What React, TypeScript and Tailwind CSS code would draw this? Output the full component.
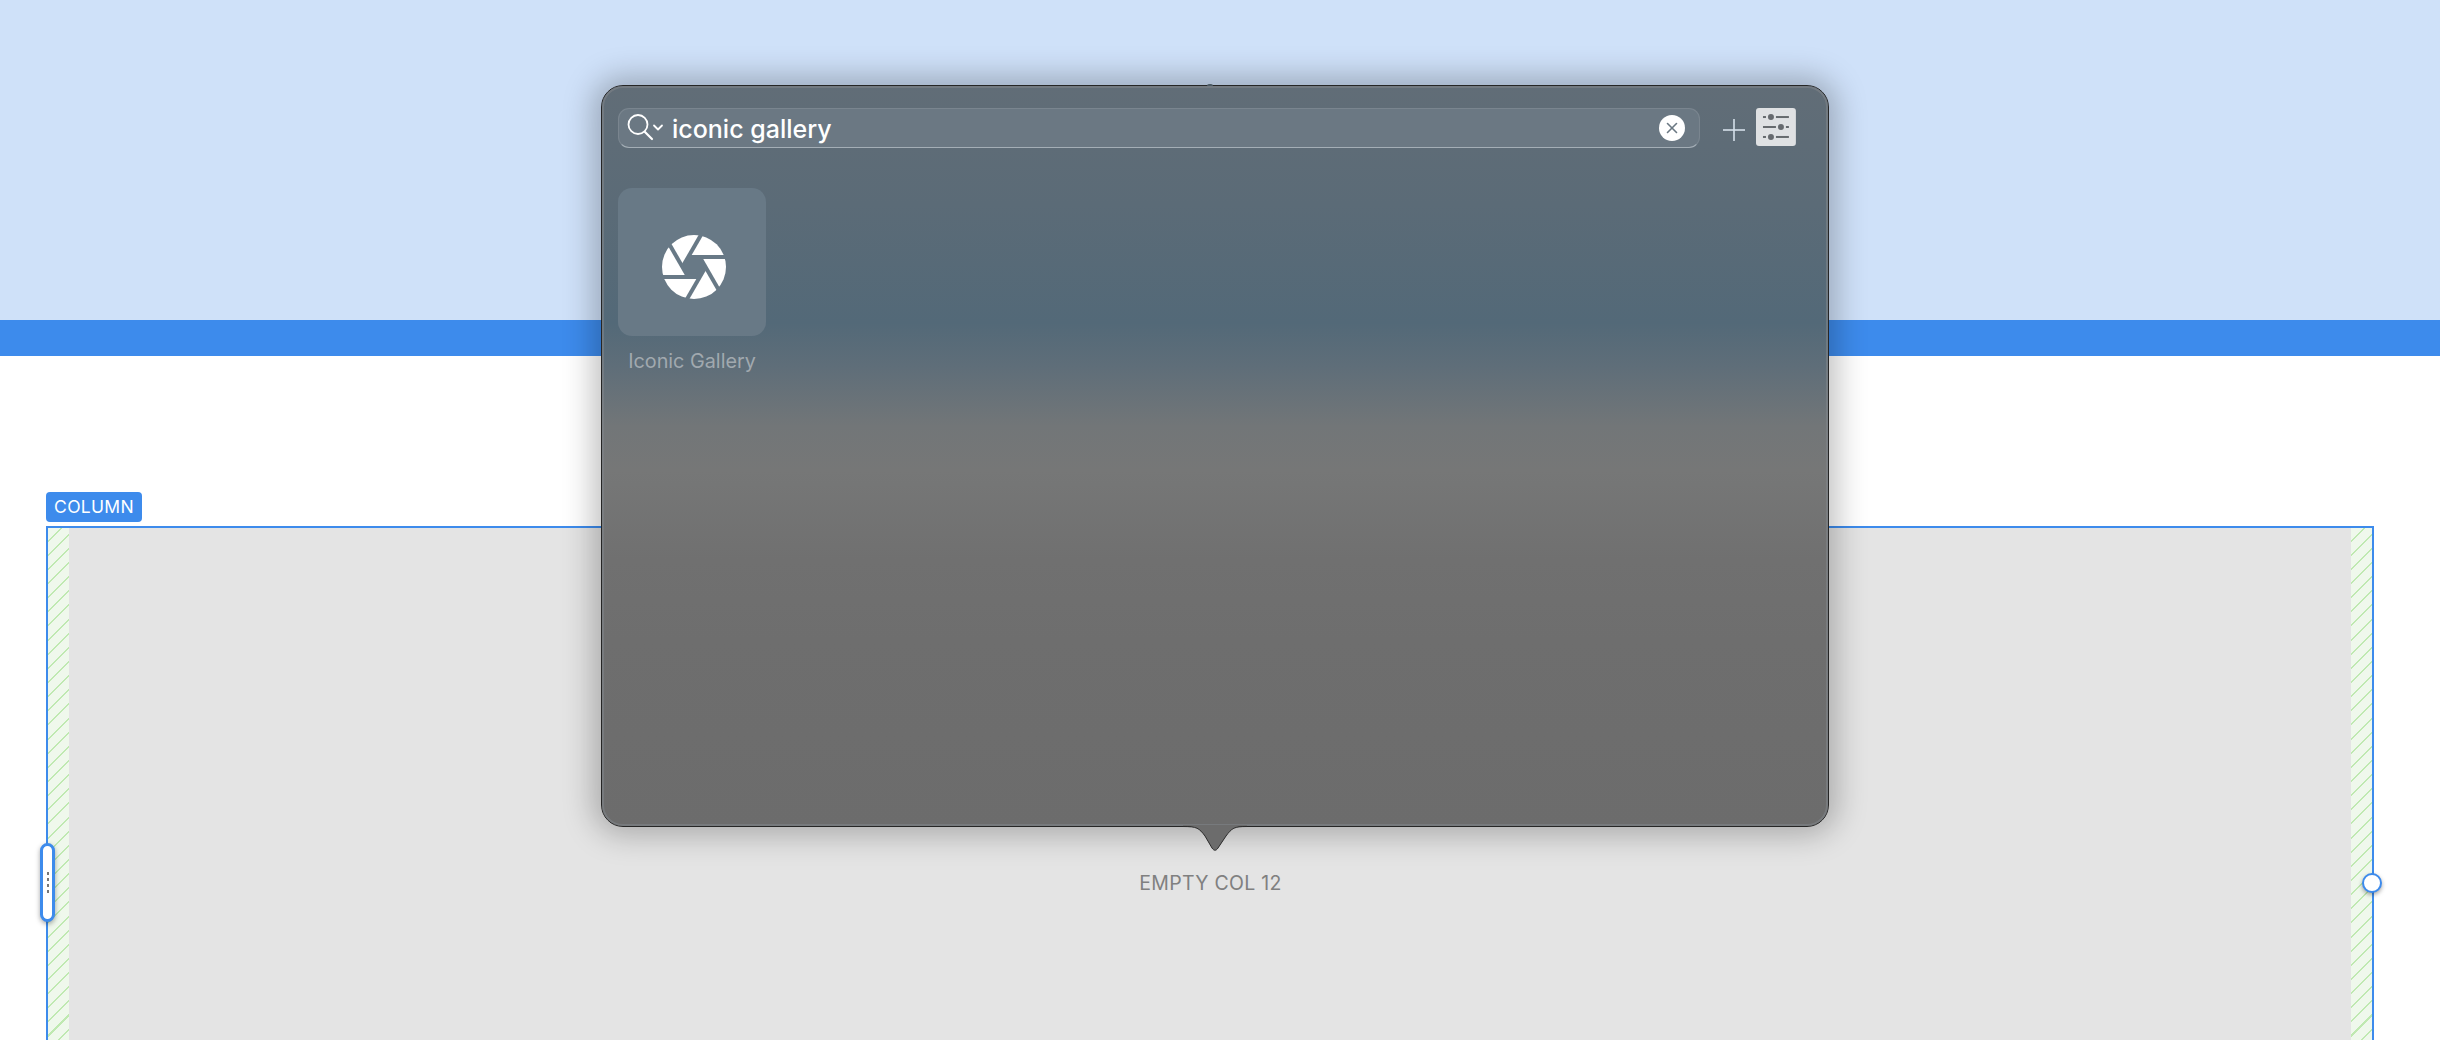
import React from "react";

const hatch =
  "w-[21px] shrink-0 bg-[repeating-linear-gradient(135deg,#eff8ec_0,#eff8ec_8.5px,#bfe9b1_8.5px,#bfe9b1_10px)]";

function Aperture() {
  const rot = [0, 60, 120, 180, 240, 300];
  return (
    <svg width="66" height="66" viewBox="-33 -33 66 66" className="ml-[3px] mt-[10px]">
      <mask id="ap">
        <circle cx="0" cy="0" r="32" fill="white" />
        <polygon points="-5.8,-10 5.8,-10 11.5,0 5.8,10 -5.8,10 -11.5,0" fill="black" />
        {rot.map((r) => (
          <line key={r} x1="-5.8" y1="-10" x2="40" y2="-10" stroke="black" strokeWidth="4" transform={`rotate(${r})`} />
        ))}
      </mask>
      <rect x="-33" y="-33" width="66" height="66" fill="white" mask="url(#ap)" />
    </svg>
  );
}

function SearchGlyph() {
  return (
    <svg width="37" height="30" viewBox="0 0 37 30" fill="none" stroke="white" className="shrink-0">
      <circle cx="11" cy="11.5" r="9.5" strokeWidth="1.8" />
      <line x1="18" y1="19" x2="25" y2="26" strokeWidth="2.2" strokeLinecap="round" />
      <path d="M27 12.5 L31 16.5 L35 12.5" strokeWidth="1.8" strokeLinecap="round" strokeLinejoin="round" />
    </svg>
  );
}

function Sliders() {
  return (
    <svg width="40" height="38" viewBox="0 0 40 38" className="block">
      <rect width="40" height="38" rx="3" fill="#dfe1e3" />
      <g fill="#666a6e">
        <rect x="7" y="8" width="3" height="2" />
        <circle cx="15" cy="9" r="3" />
        <rect x="20" y="8" width="13" height="2" />
        <rect x="7" y="18" width="13" height="2" />
        <circle cx="25" cy="19" r="3" />
        <rect x="30" y="18" width="3" height="2" />
        <rect x="7" y="28" width="3" height="2" />
        <circle cx="15" cy="29" r="3" />
        <rect x="20" y="28" width="13" height="2" />
      </g>
    </svg>
  );
}

export default function App() {
  return (
    <div className="relative h-[1040px] w-[2440px] overflow-hidden bg-white font-['Inter',sans-serif]">
      <div className="h-[320px] bg-[#cfe1f9]" />
      <div className="h-[36px] bg-[#3d8bec]" />

      <div className="pl-[46px] pr-[66px] pt-[136px]">
        <div className="mb-[4px] flex h-[30px] w-[96px] items-center justify-center rounded-[4px] bg-[#3d8bec] text-[17.5px] tracking-[0.3px] text-white">
          COLUMN
        </div>
        <div className="relative flex h-[714px] border-2 border-[#3d8bec] bg-[#e4e4e4]">
          <div className={hatch} />
          <div className="flex flex-1 items-center justify-center pl-[1px] pt-[2px] text-[19.5px] tracking-[0.3px] text-[#808080]">
            EMPTY COL 12
          </div>
          <div className={hatch} />

          <div className="absolute left-[-8px] top-[315px] flex h-[79px] w-[15px] flex-col items-center justify-center gap-[3px] rounded-full border-[3px] border-[#3d8bec] bg-white shadow-[0_2px_5px_rgba(0,0,0,0.35)]">
            <span className="h-[3px] w-[2px] bg-[#777]" />
            <span className="h-[3px] w-[2px] bg-[#777]" />
            <span className="h-[3px] w-[2px] bg-[#777]" />
            <span className="h-[3px] w-[2px] bg-[#777]" />
          </div>
          <div className="absolute right-[-10px] top-[345px] h-[20px] w-[20px] rounded-full border-2 border-[#3d8bec] bg-white shadow-[0_2px_4px_rgba(0,0,0,0.35)]" />
        </div>
      </div>

      {/* popover */}
      <div className="absolute left-[601px] top-[85px] h-[742px] w-[1228px] rounded-[22px] border border-[#262626] bg-[linear-gradient(180deg,#616d77_0%,#5b6b77_16%,#536978_32%,#5f6e79_38%,#727678_46%,#767777_52%,#707070_64%,#6e6e6e_75%,#6c6c6c_100%)] shadow-[0_0_30px_8px_rgba(0,0,0,0.25)]">
        <div className="flex h-full flex-col rounded-[21px] border-[2px] border-[#7f8488]/60 pl-[14px] pr-[30px] pt-[20px]">
          <div className="flex items-start">
            <div className="flex h-[40px] w-[1085px] items-center rounded-[11px] border border-white/10 border-b-[#a4aeb6] bg-[#6b7883] pl-[8px] pr-[14px]">
              <SearchGlyph />
              <span className="ml-[8px] flex-1 pt-[2px] text-[25px] font-medium leading-none text-white">iconic gallery</span>
              <span className="flex h-[26px] w-[26px] items-center justify-center rounded-full bg-white">
                <svg width="12" height="12" viewBox="0 0 12 12" stroke="#6b7883" strokeWidth="1.6" strokeLinecap="round">
                  <line x1="1.5" y1="1.5" x2="10.5" y2="10.5" />
                  <line x1="10.5" y1="1.5" x2="1.5" y2="10.5" />
                </svg>
              </span>
            </div>
            <div className="ml-[23px] mr-[11px] mt-[11px]">
              <svg width="22" height="22" viewBox="0 0 22 22" stroke="#d5e0ea" strokeWidth="1.6" className="block">
                <line x1="11" y1="0" x2="11" y2="22" />
                <line x1="0" y1="11" x2="22" y2="11" />
              </svg>
            </div>
            <Sliders />
          </div>

          <div className="mt-[40px] flex w-[148px] flex-col items-center">
            <div className="flex h-[148px] w-[148px] items-center justify-center rounded-[14px] bg-[#687986]">
              <Aperture />
            </div>
            <div className="mt-[13px] text-[19.8px] leading-[24px] text-[#a1a9af]">Iconic Gallery</div>
          </div>
        </div>

        <svg width="64" height="28" viewBox="0 0 64 28" className="absolute bottom-[-27px] left-[581px]">
          <path
            d="M0 1.5 C14 1.5 16 3 22 11 L29 23 C31 26 33 26 35 23 L43 11 C49 3 51 1.5 64 1.5 L64 0 L0 0 Z"
            fill="#6c6c6c"
          />
          <path
            d="M0 1.5 C14 1.5 16 3 22 11 L29 23 C31 26 33 26 35 23 L43 11 C49 3 51 1.5 64 1.5"
            fill="none"
            stroke="#2b2b2b"
            strokeWidth="1"
          />
        </svg>
        <div className="absolute left-[605px] top-[-2px] h-[2px] w-[6px] rounded-t-sm bg-[#4d5a64]" />
      </div>
    </div>
  );
}
